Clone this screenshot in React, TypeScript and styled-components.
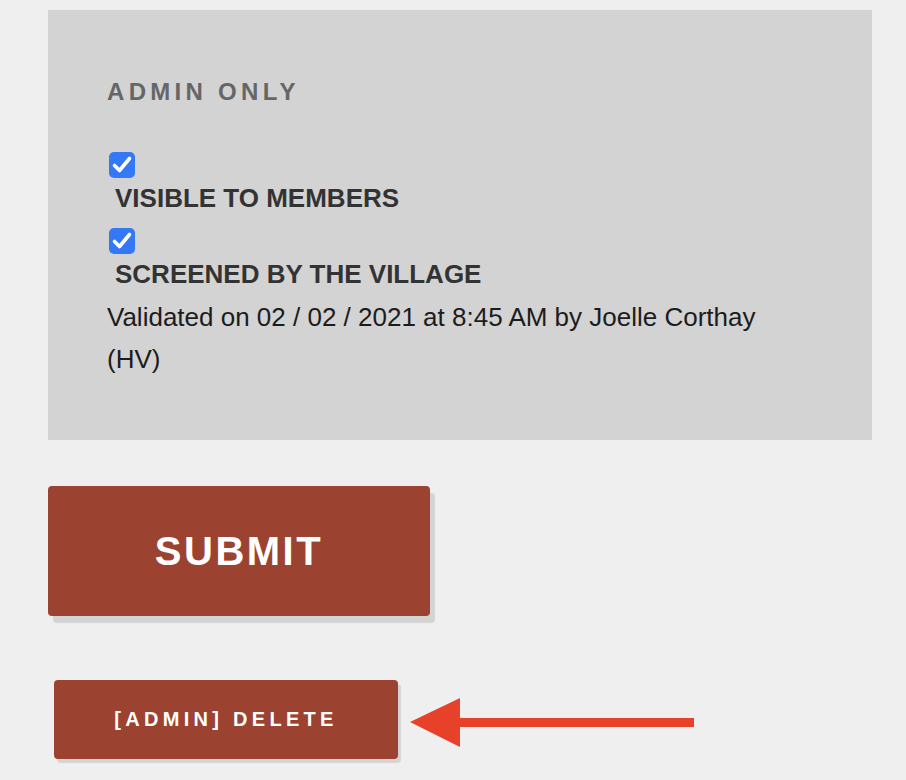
import styled, { createGlobalStyle } from "styled-components";

const GlobalStyle = createGlobalStyle`
  html, body {
    margin: 0;
    padding: 0;
    background: #efefef;
  }

  body {
    font-family: "Liberation Sans", Arial, Helvetica, sans-serif;
  }
`;

const Page = styled.div`
  display: flex;
  flex-direction: column;
  align-items: flex-start;
  padding: 10px 0 40px 48px;
`;

const AdminPanel = styled.section`
  box-sizing: border-box;
  width: 824px;
  padding: 68px 60px 60px 59px;
  background: #d3d3d3;
`;

const PanelTitle = styled.h3`
  margin: 0 0 46px;
  font-size: 24px;
  line-height: 28px;
  font-weight: 700;
  letter-spacing: 4.3px;
  text-transform: uppercase;
  color: #666666;
`;

const CheckRow = styled.div`
  display: flex;
  flex-direction: column;
  align-items: flex-start;

  & + & {
    margin-top: 15px;
  }
`;

const HiddenInput = styled.input`
  position: absolute;
  opacity: 0;
  width: 0;
  height: 0;
  margin: 0;
`;

const Box = styled.span<{ checked: boolean }>`
  display: flex;
  align-items: center;
  justify-content: center;
  width: 26px;
  height: 26px;
  margin-left: 2px;
  border-radius: 5px;
  background: ${({ checked }) => (checked ? "#3478f6" : "#ffffff")};
  box-sizing: border-box;
  border: ${({ checked }) => (checked ? "none" : "1px solid #8a8a8a")};
`;

const CheckLabel = styled.label`
  margin: 5px 0 0 8px;
  font-size: 26px;
  line-height: 30px;
  font-weight: 700;
  text-transform: uppercase;
  color: #333333;
`;

const ValidationNote = styled.p`
  margin: 7px 0 0;
  font-size: 26px;
  line-height: 42px;
  color: #1c1c1c;
`;

const Button = styled.button`
  display: flex;
  align-items: center;
  justify-content: center;
  border: none;
  border-radius: 4px;
  background: #9c4230;
  color: #ffffff;
  font-family: "Liberation Sans", Arial, Helvetica, sans-serif;
  font-weight: 700;
  text-transform: uppercase;
  cursor: pointer;
`;

const SubmitButton = styled(Button)`
  width: 382px;
  height: 130px;
  margin-top: 46px;
  font-size: 40px;
  letter-spacing: 2.5px;
  box-shadow: 5px 7px 1px #d4d4d4;
`;

const DeleteRow = styled.div`
  display: flex;
  align-items: flex-start;
  gap: 12px;
  margin-top: 64px;
`;

const DeleteButton = styled(Button)`
  width: 344px;
  height: 79px;
  margin-left: 6px;
  font-size: 20px;
  letter-spacing: 4.3px;
  box-shadow: 3px 4px 1px #d4d4d4;
`;

const Pointer = styled.svg`
  display: block;
  margin-top: 18px;
`;

interface CheckFieldProps {
  id: string;
  label: string;
  checked: boolean;
}

const CheckField = ({ id, label, checked }: CheckFieldProps) => (
  <CheckRow>
    <HiddenInput type="checkbox" id={id} checked={checked} readOnly />
    <Box checked={checked} aria-hidden>
      {checked && (
        <svg width="26" height="26" viewBox="0 0 26 26">
          <path
            d="M5.5 13.5 L10.5 18.5 L20.5 6.5"
            fill="none"
            stroke="#ffffff"
            strokeWidth="3.6"
            strokeLinecap="round"
            strokeLinejoin="round"
          />
        </svg>
      )}
    </Box>
    <CheckLabel htmlFor={id}>{label}</CheckLabel>
  </CheckRow>
);

const App = () => {
  return (
    <>
      <GlobalStyle />
      <Page>
        <AdminPanel>
          <PanelTitle>Admin only</PanelTitle>
          <CheckField id="visible" label="Visible to members" checked />
          <CheckField id="screened" label="Screened by the village" checked />
          <ValidationNote>
            Validated on 02 / 02 / 2021 at 8:45 AM by Joelle Corthay (HV)
          </ValidationNote>
        </AdminPanel>

        <SubmitButton type="submit">Submit</SubmitButton>

        <DeleteRow>
          <DeleteButton type="button">[Admin] Delete</DeleteButton>
          <Pointer width="284" height="50" viewBox="0 0 284 50">
            <polygon points="0,24 50,0 50,49" fill="#e8412a" />
            <rect x="48" y="20" width="236" height="9" fill="#e8412a" />
          </Pointer>
        </DeleteRow>
      </Page>
    </>
  );
};

export default App;
